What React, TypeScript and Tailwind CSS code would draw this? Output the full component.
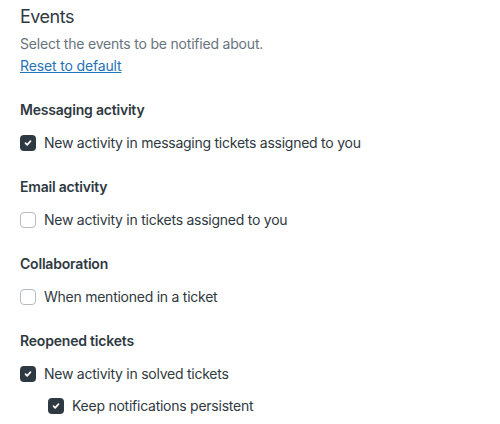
import React from "react";

const font = { fontFamily: "Inter, 'Noto Sans', sans-serif" };

function Check({ checked }: { checked: boolean }) {
  if (!checked) {
    return <span className="block h-4 w-4 shrink-0 rounded-[4px] border border-[#b3bac0] bg-white" />;
  }
  return (
    <span className="flex h-4 w-4 shrink-0 items-center justify-center rounded-[4px] bg-[#2f3941]">
      <svg width="10" height="10" viewBox="0 0 12 12" fill="none">
        <path d="M3 6.2l2 2 4-4.4" stroke="white" strokeWidth="2" strokeLinecap="round" strokeLinejoin="round" />
      </svg>
    </span>
  );
}

function Row({ label, checked, indent }: { label: string; checked: boolean; indent?: boolean }) {
  return (
    <label className={`flex h-5 items-center gap-2 ${indent ? "pl-7" : ""}`}>
      <Check checked={checked} />
      <span className="text-[14px] leading-5 tracking-[-0.25px] text-[#2f3941]">{label}</span>
    </label>
  );
}

function Group({ title, children }: { title: string; children: React.ReactNode }) {
  return (
    <div className="mt-[24px]">
      <h3 className="text-[14px] font-semibold leading-5 tracking-[-0.2px] text-[#2f3941]">{title}</h3>
      <div className="mt-[13px] flex flex-col gap-[12px]">{children}</div>
    </div>
  );
}

export default function App() {
  return (
    <div className="min-h-screen w-full bg-white px-5 pt-[5px]" style={font}>
      <h2 className="text-[18px] leading-6 tracking-[-0.5px] text-[#2f3941]">Events</h2>
      <p className="mt-[5px] text-[14px] leading-5 tracking-[-0.2px] text-[#68737d]">Select the events to be notified about.</p>
      <a href="#" className="mt-[2px] block w-fit text-[14px] leading-5 tracking-[-0.15px] text-[#1f73b7] underline">Reset to default</a>

      <Group title="Messaging activity">
        <Row label="New activity in messaging tickets assigned to you" checked />
      </Group>
      <Group title="Email activity">
        <Row label="New activity in tickets assigned to you" checked={false} />
      </Group>
      <Group title="Collaboration">
        <Row label="When mentioned in a ticket" checked={false} />
      </Group>
      <Group title="Reopened tickets">
        <Row label="New activity in solved tickets" checked />
        <Row label="Keep notifications persistent" checked indent />
      </Group>
    </div>
  );
}
